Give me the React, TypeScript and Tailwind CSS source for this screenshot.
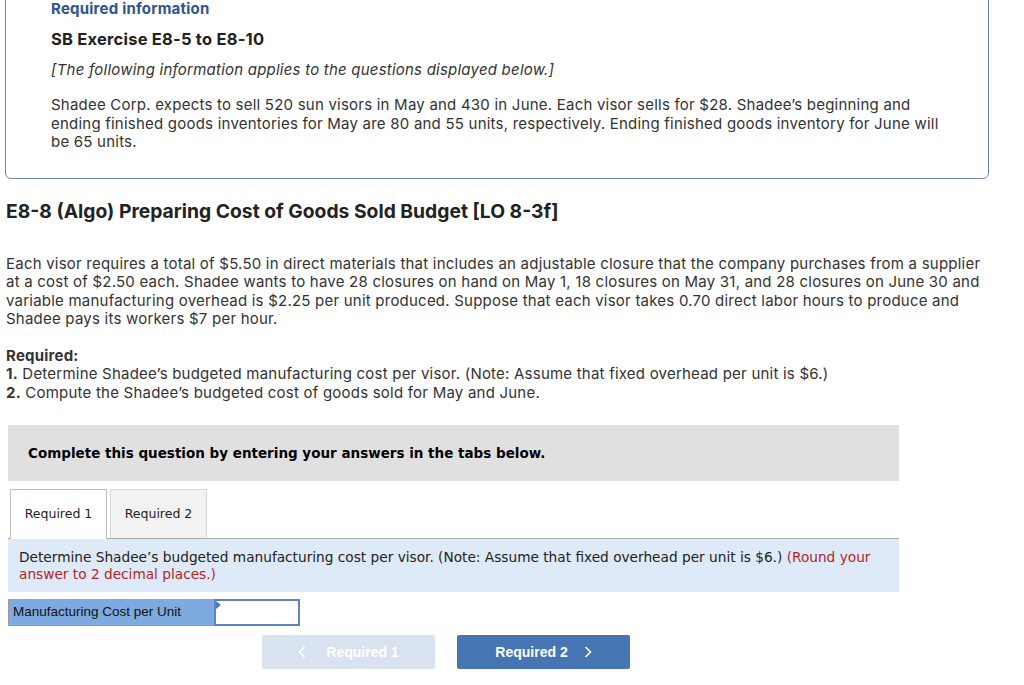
function ChevronIcon({ dir }: { dir: "left" | "right" }) {
  return (
    <svg width="8" height="12" viewBox="0 0 8 12" fill="none" aria-hidden="true">
      <path
        d={dir === "left" ? "M6.5 1L1.5 6L6.5 11" : "M1.5 1L6.5 6L1.5 11"}
        stroke="currentColor"
        strokeWidth="1.6"
      />
    </svg>
  );
}

export default function App() {
  return (
    <div className="w-[1024px] h-[685px] overflow-hidden bg-white text-[#333] font-['Inter',sans-serif] tracking-[0.22px]">
      {/* Required information box */}
      <div className="mx-[5px] w-[984px] -mt-[11px] rounded-b-[6px] border border-[#6a86ad] pt-[9px] pl-[45px] pr-[30px] pb-[26px]">
        <div className="text-[15px] font-bold text-[#2c5592] leading-[20px]">Required information</div>
        <div className="mt-[10px] text-[16.5px] font-bold text-[#222] leading-[20px]">SB Exercise E8-5 to E8-10</div>
        <p className="mt-[11px] text-[15px] italic leading-[20px]">[The following information applies to the questions displayed below.]</p>
        <p className="mt-[16px] text-[15px] leading-[18.5px]">
          Shadee Corp. expects to sell 520 sun visors in May and 430 in June. Each visor sells for $28. Shadee’s beginning and<br />
          ending finished goods inventories for May are 80 and 55 units, respectively. Ending finished goods inventory for June will<br />
          be 65 units.
        </p>
      </div>

      <div className="px-[6px]">
        <h2 className="mt-[20px] text-[19.3px] font-bold tracking-normal text-[#222] leading-[24px]">E8-8 (Algo) Preparing Cost of Goods Sold Budget [LO 8-3f]</h2>
        <p className="mt-[32px] w-[1012px] text-[15px] leading-[18.5px]">
          Each visor requires a total of $5.50 in direct materials that includes an adjustable closure that the company purchases from a supplier<br />
          at a cost of $2.50 each. Shadee wants to have 28 closures on hand on May 1, 18 closures on May 31, and 28 closures on June 30 and<br />
          variable manufacturing overhead is $2.25 per unit produced. Suppose that each visor takes 0.70 direct labor hours to produce and<br />
          Shadee pays its workers $7 per hour.
        </p>
        <div className="mt-[18px] text-[15px] leading-[18.5px]">
          <div className="font-bold">Required:</div>
          <div><span className="font-bold">1.</span> Determine Shadee’s budgeted manufacturing cost per visor. (Note: Assume that fixed overhead per unit is $6.)</div>
          <div><span className="font-bold">2.</span> Compute the Shadee’s budgeted cost of goods sold for May and June.</div>
        </div>
      </div>

      {/* Tabs section */}
      <div className="ml-[8px] w-[891px] mt-[23px] tracking-normal font-['DejaVu_Sans',Verdana,sans-serif]">
        <div className="h-[56px] bg-[#e0e0e0] flex items-center pl-[20px] text-[13.5px] font-bold text-black">
          Complete this question by entering your answers in the tabs below.
        </div>
        <div className="mt-[8px] flex items-end gap-[3px] pl-[2px] border-b border-[#a8a8a8]">
          <div className="h-[50px] w-[97px] -mb-px border border-b-0 border-[#bdbdbd] bg-white flex items-center justify-center text-[12.5px] text-[#222]">Required 1</div>
          <div className="h-[49px] w-[97px] border border-b-0 border-[#d6d6d6] bg-[#f2f2f2] flex items-center justify-center text-[12.5px] text-[#222]">Required 2</div>
        </div>
        <div className="bg-[#deeaf8] h-[53px] pl-[11px] pr-[20px] pt-[10px] text-[13.7px] leading-[17px] text-[#222]">
          Determine Shadee’s budgeted manufacturing cost per visor. (Note: Assume that fixed overhead per unit is $6.) <span className="text-[#b3261e]">(Round your answer to 2 decimal places.)</span>
        </div>
        <div className="mt-[7px] flex h-[27px] font-['Liberation_Sans',Arial,sans-serif]">
          <div className="w-[206px] bg-[#7faadf] border-l border-b border-[#999] flex items-center pl-[4px] text-[13.5px] text-[#111]">Manufacturing Cost per Unit</div>
          <div className="relative w-[86px] bg-white border-2 border-[#5b84c4]">
            <div className="absolute left-0 top-0 w-0 h-0 border-t-[4px] border-t-transparent border-b-[4px] border-b-transparent border-l-[5px] border-l-[#4a78c2]" />
          </div>
        </div>
        <div className="mt-[9px] flex gap-[22px] pl-[254px] font-['Liberation_Sans',Arial,sans-serif]">
          <div className="w-[173px] h-[34px] rounded-[2px] bg-[#d9e3f0] flex items-center justify-center gap-[20px] text-white text-[14px] font-bold">
            <ChevronIcon dir="left" />
            <span>Required 1</span>
          </div>
          <div className="w-[173px] h-[34px] rounded-[2px] bg-[#4675b3] flex items-center justify-center gap-[16px] text-white text-[14px] font-bold">
            <span>Required 2</span>
            <ChevronIcon dir="right" />
          </div>
        </div>
      </div>
    </div>
  );
}
